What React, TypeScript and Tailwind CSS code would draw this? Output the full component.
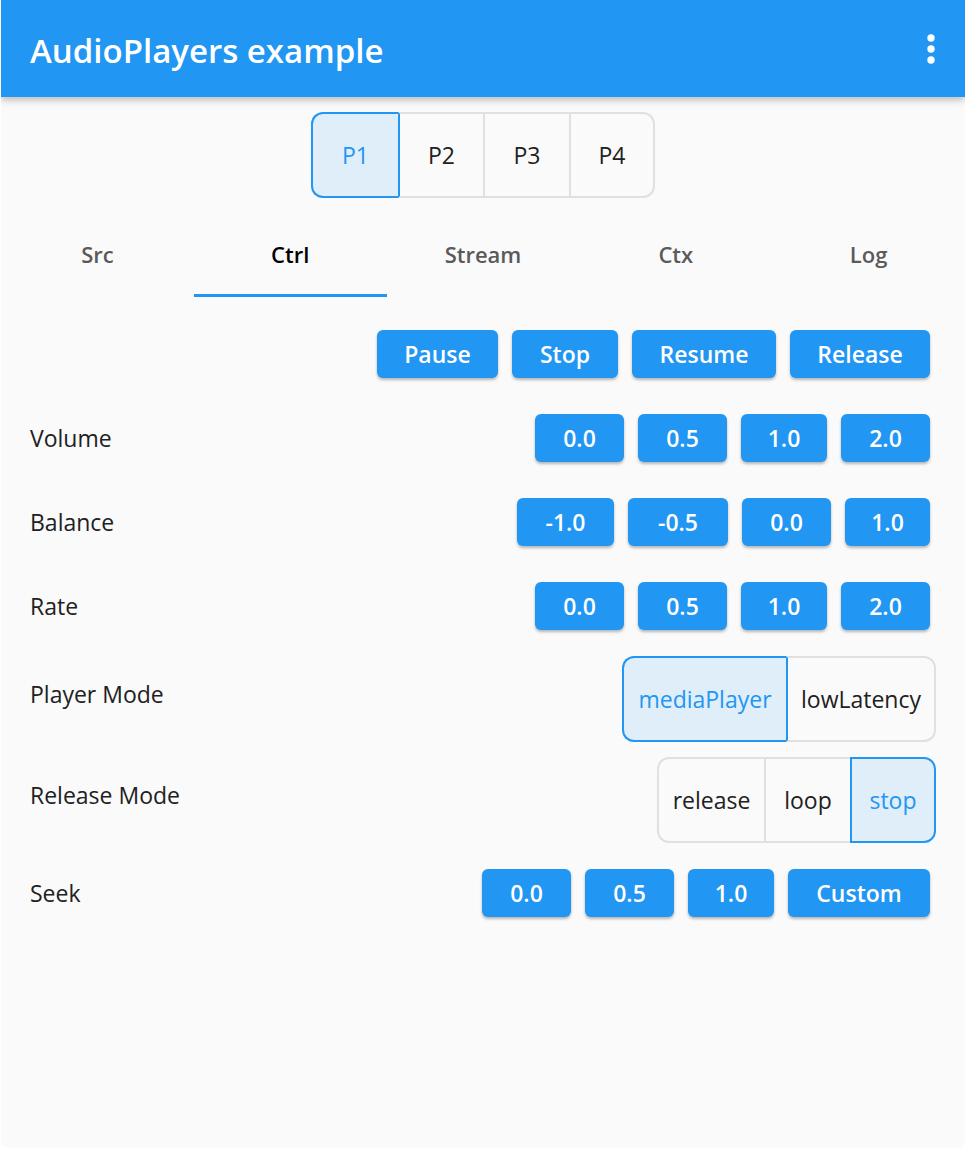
import React from "react";

const Btn = ({ w, children }: { w: string; children: React.ReactNode }) => (
  <div
    className={`${w} h-[48px] flex items-center justify-center rounded-[6px] bg-[#2196F3] text-white text-[23px] font-semibold leading-none shadow-[0_2px_3px_rgba(0,0,0,0.28)]`}
  >
    {children}
  </div>
);

type Seg = { label: string; w: string; selected?: boolean; afterSel?: boolean; first?: boolean; last?: boolean };

const Toggle = ({ segs }: { segs: Seg[] }) => (
  <div className="flex h-[86px]">
    {segs.map((s, i) => (
      <div
        key={i}
        className={[
          s.w,
          "h-full flex items-center justify-center text-[23px] border-y-2",
          s.first ? "border-l-2 rounded-l-[12px]" : "border-l-2",
          s.last ? "border-r-2 rounded-r-[12px]" : "",
          s.selected ? "bg-[#E0EEF9] text-[#2196F3] border-[#2196F3]" : "text-[#212121] border-[#e0e0e0]",
          s.afterSel ? "border-l-[#2196F3]" : "",
        ].join(" ")}
      >
        {s.label}
      </div>
    ))}
  </div>
);

const Label = ({ children, up }: { children: React.ReactNode; up?: boolean }) => (
  <div className={`text-[23px] text-[#212121] ${up ? "pb-[10px]" : ""}`}>{children}</div>
);

export default function App() {
  const tabs = ["Src", "Ctrl", "Stream", "Ctx", "Log"];
  return (
    <div className="w-[966px] h-[1149px] bg-white px-[1px] pb-[1px] flex flex-col font-['Open_Sans',sans-serif]">
      <div className="flex-1 bg-[#fafafa] rounded-b-[8px] flex flex-col overflow-hidden">
        <div className="relative z-10 h-[97px] shrink-0 bg-[#2196F3] flex items-center justify-between pl-[29px] pr-[30px] shadow-[0_3px_7px_rgba(0,0,0,0.25)]">
          <div className="text-white text-[33px] font-semibold leading-none pt-[3px]">AudioPlayers example</div>
          <svg width="8" height="30" viewBox="0 0 8 30">
            <circle cx="4" cy="4" r="3.7" fill="white" />
            <circle cx="4" cy="15" r="3.7" fill="white" />
            <circle cx="4" cy="26" r="3.7" fill="white" />
          </svg>
        </div>

        <div className="mt-[15px] flex justify-center">
          <Toggle
            segs={[
              { label: "P1", w: "w-[87px]", selected: true, first: true },
              { label: "P2", w: "w-[85px]", afterSel: true },
              { label: "P3", w: "w-[86px]" },
              { label: "P4", w: "w-[86px]", last: true },
            ]}
          />
        </div>

        <div className="mt-[12px] h-[87px] flex">
          {tabs.map((t) => (
            <div key={t} className="flex-1 flex flex-col items-center">
              <div
                className={`mt-[29px] leading-[30px] text-[22px] font-semibold ${
                  t === "Ctrl" ? "text-black" : "text-[#5a5a5a]"
                }`}
              >
                {t}
              </div>
              <div className={`mt-auto h-[3px] w-full ${t === "Ctrl" ? "bg-[#2196F3]" : ""}`} />
            </div>
          ))}
        </div>

        <div className="mt-[33px] flex justify-end gap-[14px] pr-[35px]">
          <Btn w="w-[121px]">Pause</Btn>
          <Btn w="w-[106px]">Stop</Btn>
          <Btn w="w-[144px]">Resume</Btn>
          <Btn w="w-[140px]">Release</Btn>
        </div>

        <div className="mt-[36px] flex items-center justify-between pl-[29px] pr-[35px]">
          <Label>Volume</Label>
          <div className="flex gap-[14px]">
            <Btn w="w-[89px]">0.0</Btn>
            <Btn w="w-[89px]">0.5</Btn>
            <Btn w="w-[86px]">1.0</Btn>
            <Btn w="w-[89px]">2.0</Btn>
          </div>
        </div>

        <div className="mt-[36px] flex items-center justify-between pl-[29px] pr-[35px]">
          <Label>Balance</Label>
          <div className="flex gap-[14px]">
            <Btn w="w-[97px]">-1.0</Btn>
            <Btn w="w-[100px]">-0.5</Btn>
            <Btn w="w-[89px]">0.0</Btn>
            <Btn w="w-[85px]">1.0</Btn>
          </div>
        </div>

        <div className="mt-[36px] flex items-center justify-between pl-[29px] pr-[35px]">
          <Label>Rate</Label>
          <div className="flex gap-[14px]">
            <Btn w="w-[89px]">0.0</Btn>
            <Btn w="w-[89px]">0.5</Btn>
            <Btn w="w-[86px]">1.0</Btn>
            <Btn w="w-[89px]">2.0</Btn>
          </div>
        </div>

        <div className="mt-[26px] flex items-center justify-between pl-[29px] pr-[29px]">
          <Label up>Player Mode</Label>
          <Toggle
            segs={[
              { label: "mediaPlayer", w: "w-[164px]", selected: true, first: true },
              { label: "lowLatency", w: "w-[150px]", afterSel: true, last: true },
            ]}
          />
        </div>

        <div className="mt-[15px] flex items-center justify-between pl-[29px] pr-[29px]">
          <Label up>Release Mode</Label>
          <Toggle
            segs={[
              { label: "release", w: "w-[107px]", first: true },
              { label: "loop", w: "w-[86px]" },
              { label: "stop", w: "w-[86px]", selected: true, last: true },
            ]}
          />
        </div>

        <div className="mt-[26px] flex items-center justify-between pl-[29px] pr-[35px]">
          <Label>Seek</Label>
          <div className="flex gap-[14px]">
            <Btn w="w-[89px]">0.0</Btn>
            <Btn w="w-[89px]">0.5</Btn>
            <Btn w="w-[86px]">1.0</Btn>
            <Btn w="w-[142px]">Custom</Btn>
          </div>
        </div>
      </div>
    </div>
  );
}
